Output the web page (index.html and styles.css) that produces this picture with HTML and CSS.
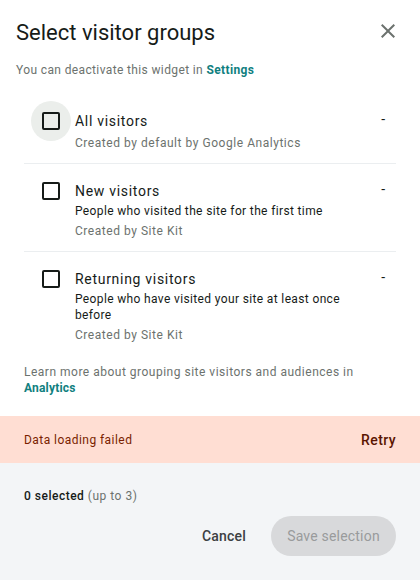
FILE: index.html
```html
<!DOCTYPE html>
<html lang="en">
<head>
<meta charset="utf-8">
<title>Select visitor groups</title>
<link rel="stylesheet" href="styles.css">
</head>
<body>
<div class="dialog">
  <div class="main">
    <div class="header">
      <h1 class="title">Select visitor groups</h1>
      <button class="close" aria-label="Close">
        <svg viewBox="0 0 24 24" width="24" height="24"><path d="M19 6.41L17.59 5 12 10.59 6.41 5 5 6.41 10.59 12 5 17.59 6.41 19 12 13.41 17.59 19 19 17.59 13.41 12z" fill="currentColor"/></svg>
      </button>
    </div>
    <p class="subtitle">You can deactivate this widget in <a class="link">Settings</a></p>
    <ul class="list">
      <li class="row">
        <span class="check hover"><span class="box"></span></span>
        <div class="text">
          <div class="name">All visitors</div>
          <div class="meta">Created by default by Google Analytics</div>
        </div>
        <span class="value">-</span>
      </li>
      <li class="row">
        <span class="check"><span class="box"></span></span>
        <div class="text">
          <div class="name">New visitors</div>
          <div class="desc">People who visited the site for the first time</div>
          <div class="meta">Created by Site Kit</div>
        </div>
        <span class="value">-</span>
      </li>
      <li class="row">
        <span class="check"><span class="box"></span></span>
        <div class="text">
          <div class="name">Returning visitors</div>
          <div class="desc">People who have visited your site at least once before</div>
          <div class="meta">Created by Site Kit</div>
        </div>
        <span class="value">-</span>
      </li>
    </ul>
    <p class="learn">Learn more about grouping site visitors and audiences in <a class="link">Analytics</a></p>
  </div>
  <div class="error">
    <span class="error-text">Data loading failed</span>
    <button class="retry">Retry</button>
  </div>
  <div class="footer">
    <p class="count"><strong>0 selected</strong> <span class="limit">(up to 3)</span></p>
    <div class="actions">
      <button class="btn cancel">Cancel</button>
      <button class="btn save" disabled>Save selection</button>
    </div>
  </div>
</div>
</body>
</html>
```

FILE: styles.css
```css
* { box-sizing: border-box; }
html, body { margin: 0; padding: 0; }
body {
  font-family: Roboto, "Noto Sans", sans-serif;
  color: #161b18;
  background: #ffffff;
  width: 420px;
  height: 580px;
  overflow: hidden;
}
.dialog {
  width: 420px;
  height: 580px;
  display: flex;
  flex-direction: column;
  background: #ffffff;
}
.main { flex: 0 0 auto; }
.header {
  display: flex;
  justify-content: space-between;
  align-items: flex-start;
  padding: 19px 20px 0 16px;
}
.title {
  margin: 0;
  font-size: 22px;
  line-height: 28px;
  font-weight: 400;
  color: #161b18;
}
.close {
  border: 0;
  background: none;
  padding: 0;
  width: 24px;
  height: 24px;
  color: #6c726e;
  display: block;
}
.close svg { display: block; }
.subtitle {
  margin: 15px 16px 0;
  font-size: 12px;
  line-height: 16px;
  color: #6c726e;
  letter-spacing: 0.37px;
}
.link {
  color: #108080;
  font-weight: 700;
  text-decoration: none;
}
.list {
  list-style: none;
  margin: 16px 24px 0;
  padding: 0;
}
.row {
  display: flex;
  align-items: flex-start;
  padding: 17px 0 12px;
  border-bottom: 1px solid #ebeef0;
}
.row:last-child { border-bottom: 0; }
.check {
  flex: 0 0 40px;
  width: 40px;
  height: 40px;
  margin: -10px 4px -10px 7px;
  border-radius: 50%;
  display: flex;
  align-items: center;
  justify-content: center;
}
.check.hover { background: #ebeeeb; }
.box {
  width: 18px;
  height: 18px;
  border: 2px solid #161b18;
  border-radius: 2px;
}
.text { flex: 1 1 auto; }
.name {
  font-size: 14px;
  line-height: 20px;
  letter-spacing: 0.7px;
  color: #161b18;
}
.desc {
  margin-top: 2px;
  font-size: 12px;
  line-height: 16px;
  letter-spacing: 0.36px;
  color: #161b18;
  padding-right: 30px;
}
.meta {
  margin-top: 4px;
  font-size: 12px;
  line-height: 16px;
  letter-spacing: 0.54px;
  color: #6c726e;
}
.value {
  flex: 0 0 auto;
  font-size: 14px;
  line-height: 16px;
  margin-right: 11px;
  color: #161b18;
}
.learn {
  margin: 9px 24px 0;
  font-size: 12px;
  line-height: 16px;
  letter-spacing: 0.5px;
  color: #6c726e;
}
.learn .link { letter-spacing: 0.2px; }
.error {
  margin-top: 20px;
  height: 47px;
  background: #ffded3;
  display: flex;
  align-items: center;
  justify-content: space-between;
  padding: 0 24px;
}
.error-text {
  font-size: 12px;
  letter-spacing: 0.45px;
  color: #7a1e00;
}
.retry {
  border: 0;
  background: none;
  padding: 0;
  font-family: inherit;
  font-size: 14px;
  font-weight: 500;
  letter-spacing: 0.4px;
  color: #5a1400;
}
.footer {
  flex: 1 1 auto;
  background: #f3f5f7;
  padding: 25px 24px 0;
}
.count {
  margin: 0;
  font-size: 12px;
  line-height: 16px;
  letter-spacing: 0.5px;
  color: #161b18;
}
.count strong { font-weight: 500; }
.limit { color: #6c726e; }
.actions {
  margin-top: 12px;
  display: flex;
  justify-content: flex-end;
  gap: 9px;
}
.btn {
  height: 40px;
  border: 0;
  border-radius: 20px;
  font-family: inherit;
  font-size: 14px;
  padding: 0 16px;
  letter-spacing: 0.2px;
}
.cancel {
  background: none;
  color: #3c4043;
  font-weight: 500;
}
.save {
  background: #d8d9db;
  color: #999b9c;
  width: 125px;
}
```
